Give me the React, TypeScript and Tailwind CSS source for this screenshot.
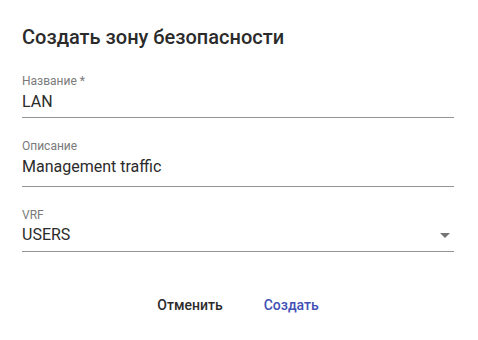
import React from 'react';

function Field({ label, value, top, pad, select }: { label: string; value: string; top: string; pad: string; select?: boolean }) {
  return (
    <div className={top}>
      <div className="text-[12px] leading-[16px] text-[#7a7a7a]">{label}</div>
      <div className={`flex items-center border-b border-[#949494] ${pad}`}>
        <span className="flex-1 text-[16px] leading-[24px] text-[#2b2b2b]">{value}</span>
        {select && (
          <svg width="10" height="5" viewBox="0 0 10 5" className="mr-[4px]">
            <path d="M0 0l5 5 5-5z" fill="#757575" />
          </svg>
        )}
      </div>
    </div>
  );
}

export default function App() {
  return (
    <div className="w-[478px] h-[340px] bg-white pl-[22px] pr-[24px] font-['Roboto',sans-serif]">
      <h2 className="pt-[21px] text-[20px] leading-[32px] font-medium text-[#2b2b2b]">
        Создать зону безопасности
      </h2>
      <Field label="Название *" value="LAN" top="mt-[20px]" pad="mt-[1px] pb-[3px]" />
      <Field label="Описание" value="Management traffic" top="mt-[20px]" pad="mt-[1px] pb-[7px]" />
      <Field label="VRF" value="USERS" top="mt-[20px]" pad="pb-[4px]" select />
      <div className="mt-[43px] flex justify-center gap-[41px] text-[14px] leading-[20px] font-medium">
        <button className="text-[#2b2b2b]">Отменить</button>
        <button className="text-[#3f51b5]">Создать</button>
      </div>
    </div>
  );
}
